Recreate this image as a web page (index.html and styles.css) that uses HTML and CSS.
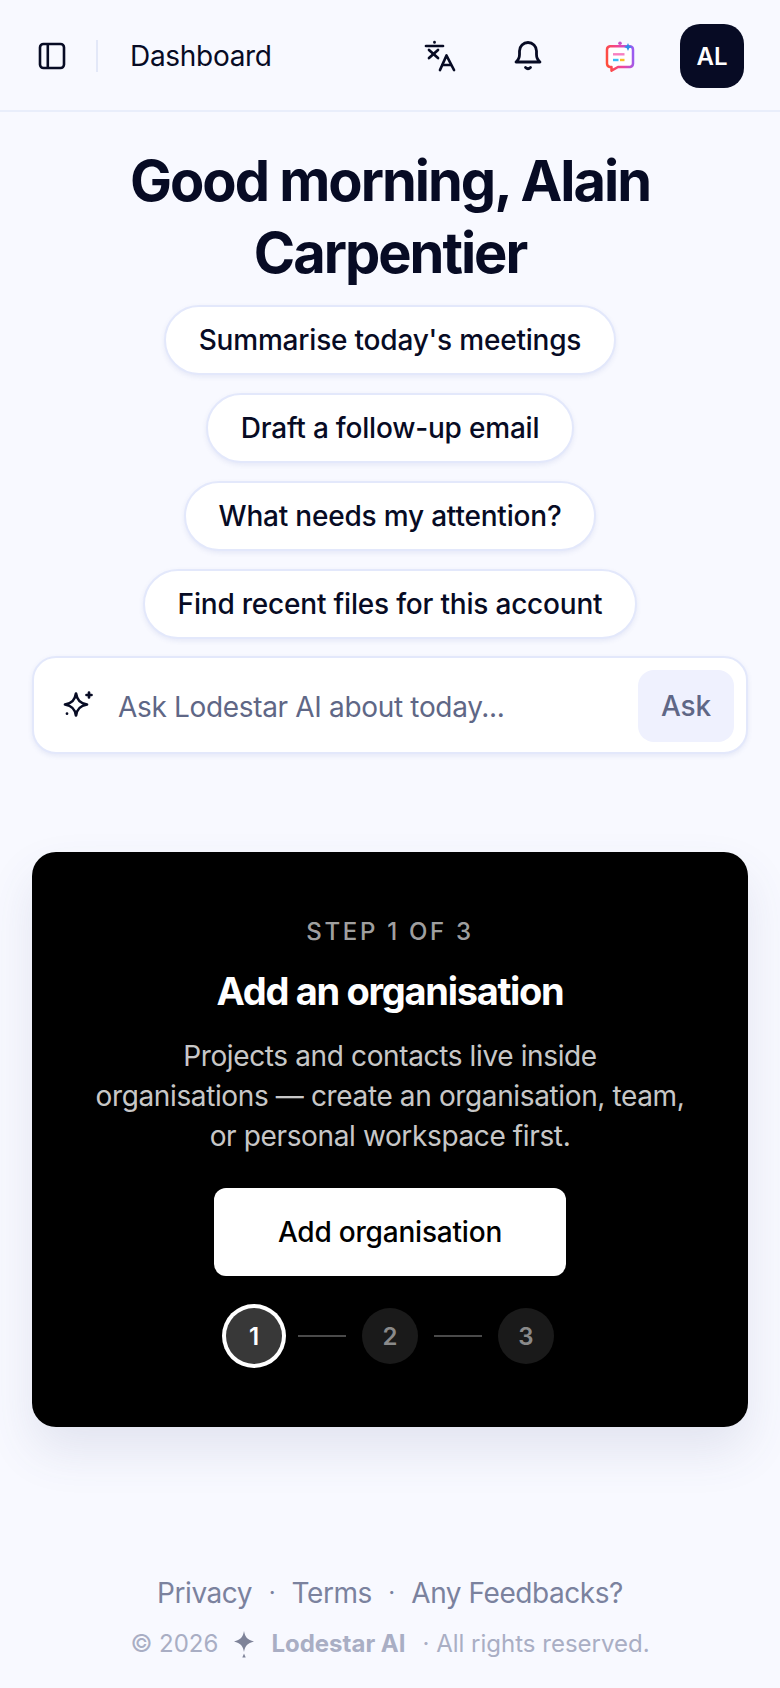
FILE: index.html
```html
<!DOCTYPE html>
<html lang="en">
<head>
<meta charset="utf-8">
<title>Dashboard</title>
<link rel="stylesheet" href="styles.css">
</head>
<body>
<header class="topbar">
  <div class="topbar-left">
    <button class="icon-btn" aria-label="Toggle sidebar">
      <svg class="icon" viewBox="0 0 28 28" fill="none" stroke="#070b24" stroke-width="2.6" stroke-linejoin="round"><rect x="2" y="2" width="24" height="24" rx="3.5"/><path d="M9.800 2v24"/></svg>
    </button>
    <span class="divider"></span>
    <span class="page-title">Dashboard</span>
  </div>
  <div class="topbar-right">
    <button class="icon-btn" aria-label="Language">
      <svg class="icon-lg" viewBox="0 0 32 32" fill="none" stroke="#070b24" stroke-width="2.7" stroke-linecap="round" stroke-linejoin="round"><path d="M2 6h17"/><path d="M10.500 2v.5"/><path d="M5 10l9 8"/><path d="M14 10l-9 8"/><path d="M16 30l6.500-14.500L30 30"/><path d="M18.500 25h8"/></svg>
    </button>
    <button class="icon-btn" aria-label="Notifications">
      <svg class="icon-lg" viewBox="0 0 32 32" fill="none" stroke="#070b24" stroke-width="2.8" stroke-linecap="round" stroke-linejoin="round"><path d="M4 22c2.500-2 3.500-4 3.500-7.500V11a8.500 8.500 0 0 1 17 0v3.500c0 3.500 1 5.500 3.500 7.500z"/><path d="M13.500 27.500c1.500 1.400 3.500 1.400 5 0"/></svg>
    </button>
    <button class="icon-btn" aria-label="AI assistant">
      <svg class="icon-lg" viewBox="0 0 32 32" fill="none">
        <defs><linearGradient id="chat" x1="0" y1="0.6" x2="1" y2="0.4"><stop offset="0" stop-color="#ff4d3d"/><stop offset=".55" stop-color="#ee459f"/><stop offset="1" stop-color="#9a5cf0"/></linearGradient></defs>
        <path d="M6 6.300h20a3.500 3.500 0 0 1 3 3.500v13.700a3.500 3.500 0 0 1-3 3.500H14l-6.500 3.700v-3.700H6a3.500 3.500 0 0 1-3-3.500V9.800a3.500 3.500 0 0 1 3-3.500z" stroke="url(#chat)" stroke-width="2.500" fill="#fff" stroke-linejoin="round"/>
        <path d="M9 14.300h11.500" stroke="#f77fc0" stroke-width="2.400"/>
        <path d="M9 20h5.500" stroke="#38bdf8" stroke-width="2.400"/>
        <path d="M16 20h4.500" stroke="#fbbf24" stroke-width="2.400"/>
        <circle cx="16" cy="3.200" r="1.800" fill="#c850c8"/>
        <path d="M24 3l1.200 2.800 2.800 1.200-2.800 1.200L24 11l-1.200-2.800L20 7l2.800-1.200z" fill="#2f8fe8"/>
      </svg>
    </button>
    <button class="avatar">AL</button>
  </div>
</header>

<main class="content">
  <h1 class="greeting">Good morning, Alain Carpentier</h1>
  <div class="chips">
    <button class="chip">Summarise today's meetings</button>
    <button class="chip">Draft a follow-up email</button>
    <button class="chip">What needs my attention?</button>
    <button class="chip">Find recent files for this account</button>
  </div>
  <form class="ask">
    <svg class="ask-icon" viewBox="0 0 32 32" fill="none" stroke="#070b24" stroke-width="2.700" stroke-linejoin="round" stroke-linecap="round"><path d="M14 4.500c1 6.500 3.800 9.700 11 11-7.200 1.300-10 4.500-11 11-1-6.500-3.800-9.700-11-11 7.200-1.300 10-4.500 11-11z"/><path d="M27 3.500v5M24.500 6h5"/><path d="M5 24.500v.2"/></svg>
    <span class="ask-placeholder">Ask Lodestar AI about today...</span>
    <button class="ask-btn" type="button">Ask</button>
  </form>

  <section class="card">
    <div class="step-label">STEP 1 OF 3</div>
    <h2 class="card-title">Add an organisation</h2>
    <p class="card-text">Projects and contacts live inside organisations — create an organisation, team, or personal workspace first.</p>
    <button class="card-btn">Add organisation</button>
    <div class="steps">
      <span class="step step-active">1</span>
      <span class="step-line"></span>
      <span class="step">2</span>
      <span class="step-line"></span>
      <span class="step">3</span>
    </div>
  </section>
</main>

<footer class="footer">
  <nav class="footer-links">
    <a>Privacy</a><span class="dot">·</span><a>Terms</a><span class="dot">·</span><a>Any Feedbacks?</a>
  </nav>
  <div class="copyright">
    <span>© 2026</span>
    <svg class="star" viewBox="0 0 24 28" fill="#7e8399"><path d="M12 1c1 6 3.500 9 10 10.500-6.500 1.500-9 4.500-10 10.500-1-6-3.500-9-10-10.500C8.500 10 11 7 12 1z"/><path d="M12 23.500l1.700 4h-3.400z"/></svg>
    <strong>Lodestar AI</strong>
    <span class="rights">· All rights reserved.</span>
  </div>
</footer>
</body>
</html>
```

FILE: styles.css
```css
* { box-sizing: border-box; }
html, body { margin: 0; padding: 0; }
body {
  width: 780px;
  min-height: 1688px;
  background: #f8f9ff;
  color: #070b24;
  font-family: Inter, "Liberation Sans", sans-serif;
  display: flex;
  flex-direction: column;
}
button { font-family: inherit; border: 0; background: none; padding: 0; color: inherit; }

.topbar {
  height: 112px;
  border-bottom: 2px solid #e9eefb;
  padding: 2px 36px 0 38px;
  display: flex;
  align-items: center;
  justify-content: space-between;
}
.topbar-left { display: flex; align-items: center; }
.topbar-right { display: flex; align-items: center; }
.icon-btn { display: flex; align-items: center; justify-content: center; }
.icon { width: 28px; height: 28px; display: block; }
.icon-lg { width: 32px; height: 32px; display: block; }
.divider { width: 2px; height: 32px; background: #e3e8f8; margin: 0 32px 0 30px; }
.page-title { font-size: 28px; font-weight: 400; letter-spacing: -0.3px; }
.topbar-right .icon-btn { width: 32px; margin-right: 56px; }
.topbar-right .icon-btn:nth-child(2) { margin-right: 60px; }
.topbar-right .icon-btn:nth-child(3) { margin-right: 44px; }
.avatar {
  width: 64px; height: 64px; border-radius: 20px;
  background: #070b24; color: #fff;
  font-size: 24px; font-weight: 600;
}

.content { padding: 33px 32px 0; display: flex; flex-direction: column; align-items: center; }
.greeting {
  margin: 0;
  font-size: 56px; line-height: 72px; font-weight: 700;
  letter-spacing: -2px; text-align: center;
  width: 600px;
}
.chips { margin-top: 16px; display: flex; flex-direction: column; align-items: center; gap: 18px; }
.chip {
  height: 70px; padding: 0 33px;
  background: #fff; border: 2px solid #e3e8fb; border-radius: 35px;
  font-size: 28px; font-weight: 500; letter-spacing: -0.2px; color: #070b24;
  box-shadow: 0 2px 5px rgba(70, 90, 180, 0.1);
}
.ask {
  margin-top: 17px; width: 716px; height: 98px;
  background: #fff; border: 2px solid #e3e8fb; border-radius: 24px;
  display: flex; align-items: center;
  padding: 0 12px 0 28px;
  box-shadow: 0 2px 5px rgba(70, 90, 180, 0.1);
}
.ask-icon { width: 32px; height: 32px; flex: none; }
.ask-placeholder { margin-left: 24px; padding-top: 3px; flex: 1; font-size: 28px; letter-spacing: -0.33px; color: #5f6786; }
.ask-btn {
  width: 96px; height: 72px; border-radius: 16px; margin-top: 2px;
  background: #eff1fe; color: #5f6786;
  font-size: 28px; font-weight: 500; letter-spacing: -0.2px;
}

.card {
  margin-top: 98px; width: 716px; height: 575px;
  background: #000; border-radius: 24px;
  padding: 66px 48px 0;
  display: flex; flex-direction: column; align-items: center;
  box-shadow: 0 24px 48px rgba(70, 80, 130, 0.12);
}
.step-label { font-size: 24px; line-height: 28px; font-weight: 500; letter-spacing: 2.700px; color: rgba(255,255,255,0.65); }
.card-title { margin: 21px 0 0; font-size: 38px; line-height: 48px; font-weight: 700; letter-spacing: -1.300px; color: #fff; }
.card-text { margin: 21px 0 0; max-width: 591px; font-size: 28px; line-height: 40px; letter-spacing: -0.37px; text-align: center; color: rgba(255,255,255,0.8); }
.card-btn {
  margin-top: 32px; width: 352px; height: 88px; flex: none;
  background: #fff; color: #000; border-radius: 12px;
  font-size: 28px; font-weight: 500; letter-spacing: -0.2px;
}
.steps { margin-top: 32px; display: flex; align-items: center; }
.step {
  width: 56px; height: 56px; border-radius: 50%;
  background: #1a1a1a; color: #8a8a8a;
  font-size: 24px; font-weight: 600;
  display: flex; align-items: center; justify-content: center;
}
.step-active { background: #383838; color: #fff; box-shadow: 0 0 0 4px #fff; }
.step-line { width: 48px; height: 2px; background: #4a4a4a; margin: 0 16px; }

.footer { margin-top: auto; padding-bottom: 26px; display: flex; flex-direction: column; align-items: center; }
.footer-links { display: flex; align-items: center; font-size: 28px; line-height: 40px; letter-spacing: -0.45px; color: #7b829e; }
.dot { margin: 0 16.500px; font-size: 24px; }
.copyright { margin-top: 13px; display: flex; align-items: center; font-size: 24px; line-height: 36px; color: #a9aec4; }
.star { width: 24px; height: 28px; margin: 0 15px 0 14px; }
.copyright strong { font-weight: 700; }
.rights { margin-left: 17px; }
```
